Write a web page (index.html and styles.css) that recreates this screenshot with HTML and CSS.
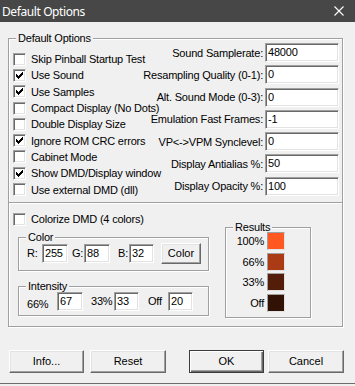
FILE: index.html
```html
<!DOCTYPE html>
<html>
<head>
<meta charset="utf-8">
<link rel="stylesheet" href="styles.css">
</head>
<body>
<div class="window">
  <div class="titlebar">
    <span class="title">Default Options</span>
    <svg class="close" width="10" height="10" viewBox="0 0 10 10"><path d="M0.5 0.5L9.5 9.5M9.5 0.5L0.5 9.5" stroke="#fff" stroke-width="1.1" fill="none"/></svg>
  </div>
  <fieldset class="group main">
    <legend>Default Options</legend>
    <div class="main-inner">
      <div class="top">
        <div class="checks">
          <div class="check"><span class="box"></span><span>Skip Pinball Startup Test</span></div>
          <div class="check"><span class="box"><svg width="11" height="11" viewBox="0 0 11 11"><path d="M2 4h1v3H2zM3 5h1v3H3zM4 6h1v3H4zM5 5h1v3H5zM6 4h1v3H6zM7 3h1v3H7zM8 2h1v3H8z" fill="#000"/></svg></span><span>Use Sound</span></div>
          <div class="check"><span class="box"><svg width="11" height="11" viewBox="0 0 11 11"><path d="M2 4h1v3H2zM3 5h1v3H3zM4 6h1v3H4zM5 5h1v3H5zM6 4h1v3H6zM7 3h1v3H7zM8 2h1v3H8z" fill="#000"/></svg></span><span>Use Samples</span></div>
          <div class="check"><span class="box"></span><span>Compact Display (No Dots)</span></div>
          <div class="check"><span class="box"></span><span>Double Display Size</span></div>
          <div class="check"><span class="box"><svg width="11" height="11" viewBox="0 0 11 11"><path d="M2 4h1v3H2zM3 5h1v3H3zM4 6h1v3H4zM5 5h1v3H5zM6 4h1v3H6zM7 3h1v3H7zM8 2h1v3H8z" fill="#000"/></svg></span><span>Ignore ROM CRC errors</span></div>
          <div class="check"><span class="box"></span><span>Cabinet Mode</span></div>
          <div class="check"><span class="box"><svg width="11" height="11" viewBox="0 0 11 11"><path d="M2 4h1v3H2zM3 5h1v3H3zM4 6h1v3H4zM5 5h1v3H5zM6 4h1v3H6zM7 3h1v3H7zM8 2h1v3H8z" fill="#000"/></svg></span><span>Show DMD/Display window</span></div>
          <div class="check"><span class="box"></span><span>Use external DMD (dll)</span></div>
        </div>
        <div class="fields">
          <span class="flabel">Sound Samplerate:</span><span class="edit">48000</span>
          <span class="flabel">Resampling Quality (0-1):</span><span class="edit">0</span>
          <span class="flabel">Alt. Sound Mode (0-3):</span><span class="edit">0</span>
          <span class="flabel">Emulation Fast Frames:</span><span class="edit">-1</span>
          <span class="flabel">VP&lt;-&gt;VPM Synclevel:</span><span class="edit">0</span>
          <span class="flabel">Display Antialias %:</span><span class="edit">50</span>
          <span class="flabel">Display Opacity %:</span><span class="edit">100</span>
        </div>
      </div>
      <div class="sep"></div>
      <div class="lower">
        <div class="lower-left">
          <div class="check"><span class="box"></span><span>Colorize DMD (4 colors)</span></div>
          <fieldset class="group color">
            <legend>Color</legend>
            <div class="row color-row">
              <span class="lbl l-r">R:</span><span class="edit e26">255</span>
              <span class="lbl l-g">G:</span><span class="edit e26">88</span>
              <span class="lbl l-b">B:</span><span class="edit e25">32</span>
              <span class="btn btn-color">Color</span>
            </div>
          </fieldset>
          <fieldset class="group intensity">
            <legend>Intensity</legend>
            <div class="row int-row">
              <span class="lbl l-66">66%</span><span class="edit e26">67</span>
              <span class="lbl l-33">33%</span><span class="edit e25">33</span>
              <span class="lbl l-off">Off</span><span class="edit e25">20</span>
            </div>
          </fieldset>
        </div>
        <fieldset class="group results">
          <legend>Results</legend>
          <div class="swatches">
            <span class="slabel">100%</span><span class="swatch" style="background:#ff5820"></span>
            <span class="slabel">66%</span><span class="swatch" style="background:#ab3b15"></span>
            <span class="slabel">33%</span><span class="swatch" style="background:#541d0a"></span>
            <span class="slabel">Off</span><span class="swatch" style="background:#331206"></span>
          </div>
        </fieldset>
      </div>
    </div>
  </fieldset>
  <div class="buttons">
    <span class="btn b-info">Info...</span>
    <span class="btn b-reset">Reset</span>
    <span class="btn b-ok">OK</span>
    <span class="btn b-cancel">Cancel</span>
  </div>
</div>
</body>
</html>
```

FILE: styles.css
```css
* { box-sizing: border-box; }
html, body { margin: 0; padding: 0; }
body {
  width: 355px;
  height: 386px;
  background: #f0f0f0;
  font-family: "Liberation Sans", Arial, sans-serif;
  font-size: 11px;
  letter-spacing: -0.2px;
  color: #000;
  overflow: hidden;
}
.window {
  height: 384px;
  border-bottom: 1px solid #6d6d6d;
}
.titlebar {
  height: 22px;
  background: #474747;
  color: #fff;
  display: flex;
  align-items: center;
  justify-content: space-between;
  padding: 0 11px 0 2px;
  font-family: "Noto Sans", sans-serif;
  font-size: 12px;
  letter-spacing: -0.4px;
}
.close { display: block; }

.group {
  margin: 0;
  padding: 0;
  min-width: 0;
  border: 1px solid #a0a0a0;
  box-shadow: 1px 1px 0 #fff, inset 1px 1px 0 #fff;
}
.group > legend {
  padding: 0 2px;
  margin-left: 7px;
  line-height: 13px;
  background: #f0f0f0;
}
.main {
  margin: 10px 0 0 8px;
  width: 335px;
}
.main-inner { padding: 0 3px 8px 4px; }

.top {
  display: grid;
  grid-template-columns: 1fr auto;
  height: 152.7px;
}
.checks {
  padding-top: 6px;
  display: flex;
  flex-direction: column;
  min-width: 0;
}
.check {
  display: flex;
  align-items: center;
  gap: 5px;
  height: 16.3px;
  white-space: nowrap;
}
.box {
  flex: none;
  width: 13px;
  height: 13px;
  background: #fff;
  border: 1px solid;
  border-color: #a0a0a0 #fff #fff #a0a0a0;
  box-shadow: inset 1px 1px 0 #696969, inset -1px -1px 0 #e3e3e3;
}
.box svg { display: block; margin: 0; }

.fields {
  display: grid;
  grid-template-columns: auto 74px;
  column-gap: 2px;
  row-gap: 3.3px;
  align-items: center;
  margin-top: -2px;
  align-content: start;
}
.flabel { text-align: right; white-space: nowrap; }
.edit {
  display: block;
  height: 19px;
  line-height: 16px;
  background: #fff;
  border: 1px solid;
  border-color: #a0a0a0 #fff #fff #a0a0a0;
  box-shadow: inset 1px 1px 0 #696969, inset -1px -1px 0 #e3e3e3;
  padding-left: 2px;
  white-space: nowrap;
}
.sep {
  height: 2px;
  border-top: 1px solid #a0a0a0;
  border-bottom: 1px solid #fff;
  margin: 4.3px -3px 0 -4px;
}
.lower {
  display: grid;
  grid-template-columns: 196px 1fr;
  margin-top: 7.35px;
  align-items: start;
}
.color {
  margin: 3.35px 0 0 5px;
  width: 191px;
}
.row {
  display: flex;
  align-items: center;
  height: 19px;
  padding-left: 8px;
}
.color-row { margin-bottom: 7px; }
.lbl { flex: none; white-space: nowrap; }
.l-r { width: 15px; }
.l-g { width: 12px; margin-left: 4px; }
.l-b { width: 11px; margin-left: 8px; }
.e26 { width: 26px; flex: none; }
.e25 { width: 25px; flex: none; }

.btn {
  display: flex;
  align-items: center;
  justify-content: center;
  flex: none;
  height: 23px;
  background: #f0f0f0;
  border: 1px solid;
  border-color: #fff #696969 #696969 #fff;
  box-shadow: inset -1px -1px 0 #a0a0a0, inset 1px 1px 0 #e3e3e3;
  letter-spacing: 0;
}
.btn-color { width: 40px; height: 21px; margin-left: 7px; }

.intensity {
  margin: 9px 0 0 5px;
  width: 191px;
}
.int-row { margin: -1px 0 4px; }
.l-66 { width: 30px; position: relative; top: 3px; }
.l-33 { width: 23px; margin-left: 8px; }
.l-off { width: 20px; margin-left: 9px; }

.results {
  margin: 9.65px 0 0 16px;
  width: 86px;
}
.swatches {
  display: grid;
  grid-template-columns: 1fr 18px;
  column-gap: 3px;
  row-gap: 2.7px;
  align-items: center;
  margin-top: -2px;
  padding: 0 25px 5px 0;
}
.slabel { text-align: right; }
.swatch {
  display: block;
  height: 18px;
  border: 1px solid;
  border-color: #a0a0a0 #e3e3e3 #e3e3e3 #a0a0a0;
}

.buttons {
  display: flex;
  margin-top: 22.9px;
  padding-left: 9px;
}
.b-info { width: 75px; }
.b-reset { width: 76px; margin-left: 6px; }
.b-ok {
  width: 75px;
  margin-left: 23px;
  border: 1px solid #3c3c3c;
  box-shadow: inset 1px 1px 0 #fff, inset -1px -1px 0 #696969, inset -2px -2px 0 #a0a0a0;
}
.b-cancel { width: 76px; margin-left: 4px; }
```
